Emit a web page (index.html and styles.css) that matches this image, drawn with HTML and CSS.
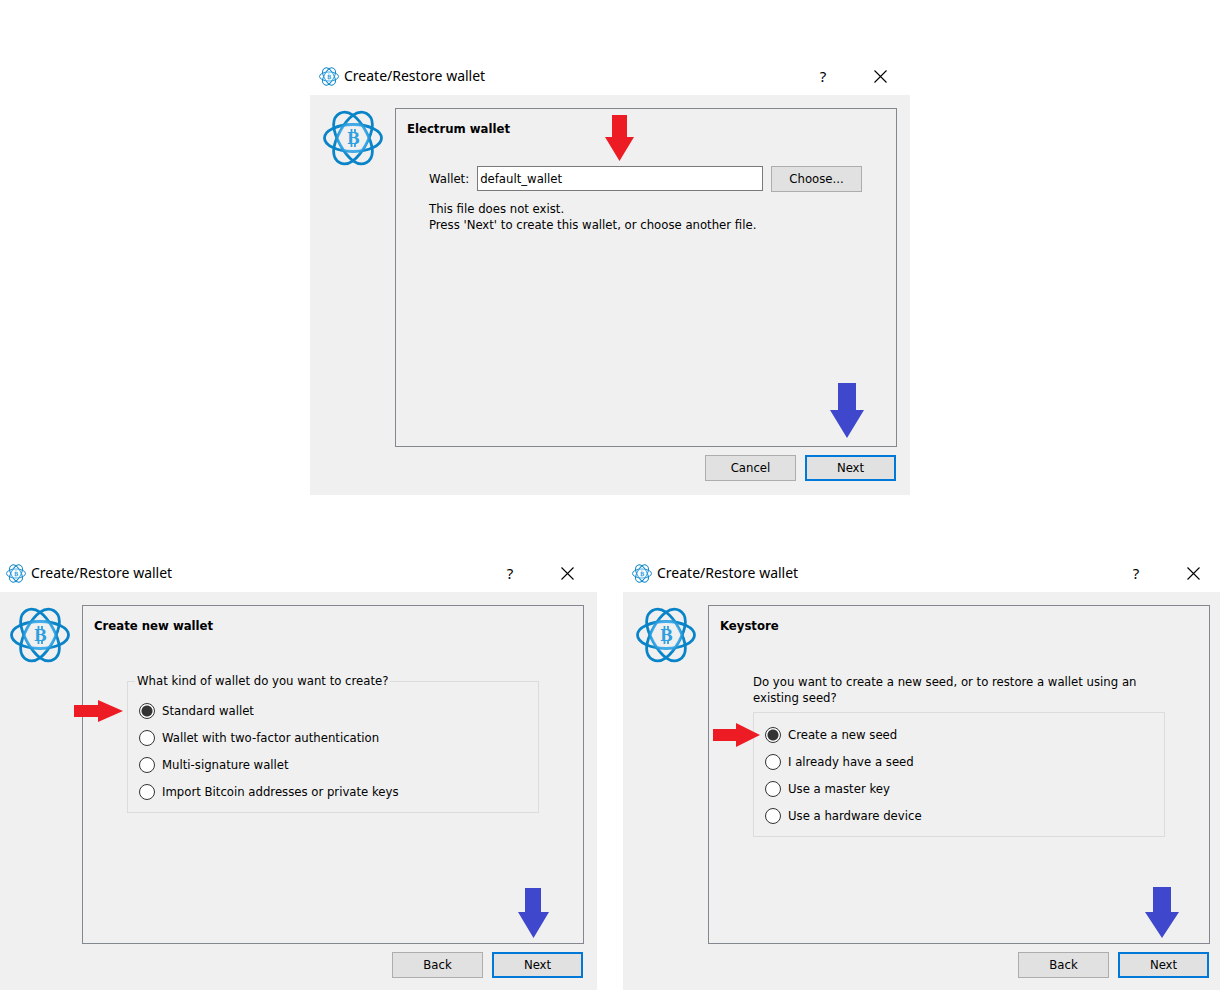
FILE: index.html
```html
<!DOCTYPE html>
<html lang="en">
<head>
    <meta charset="UTF-8">
    <meta name="viewport" content="width=device-width, initial-scale=1.0">
    <title>Create/Restore wallet</title>
    <link rel="stylesheet" href="styles.css">
</head>

<body>
    <!-- shared icons -->
    <svg class="defs" width="0" height="0" aria-hidden="true">
        <defs>
            <radialGradient id="orbit" gradientUnits="userSpaceOnUse" cx="0" cy="0" r="30">
                <stop offset="0.45" stop-color="#45aeea"></stop>
                <stop offset="0.6" stop-color="#0a84c8"></stop>
            </radialGradient>
            <symbol id="logo" viewBox="-30 -28 60 56">
                <g fill="none" stroke="url(#orbit)" stroke-width="2.8">
                    <ellipse cx="0" cy="0" rx="28.500" ry="13.500"></ellipse>
                    <path transform="rotate(61)" d="M-28 0C-28-10-16-14.500 0-14.500S28-10 28 0 16 14.500 0 14.500-28 10-28 0z"></path>
                    <path transform="rotate(119)" d="M-28 0C-28-10-16-14.500 0-14.500S28-10 28 0 16 14.500 0 14.500-28 10-28 0z"></path>
                </g>
                <text class="logo-letter" x="0.500" y="6" text-anchor="middle">B</text>
                <path d="M-1.500-9v3M2-9v3M-1.500 6v3M2 6v3" stroke="#2f9fe0" stroke-width="1.800"></path>
            </symbol>
            <symbol id="close" viewBox="0 0 13 13">
                <path d="M0.500 0.500l12 12M12.500 0.500l-12 12" stroke="#000" stroke-width="1.100"></path>
            </symbol>
        </defs>
    </svg>

    <main class="page">
        <section class="window window-top">
            <header class="titlebar">
                <svg class="title-icon"><use href="#logo"></use></svg>
                <h1>Create/Restore wallet</h1>
                <button class="caption-btn" type="button">?</button>
                <button class="caption-btn" type="button" aria-label="Close"><svg class="close-icon"><use href="#close"></use></svg></button>
            </header>
            <form class="window-body">
                <svg class="logo"><use href="#logo"></use></svg>
                <div class="panel">
                    <h2>Electrum wallet</h2>
                    <div class="file-row">
                        <label for="wallet-name">Wallet:</label>
                        <input type="text" id="wallet-name" value="default_wallet">
                        <button class="btn" type="button">Choose...</button>
                    </div>
                    <p class="file-note">This file does not exist.<br>Press 'Next' to create this wallet, or choose another file.</p>
                    <svg class="arrow arrow-input" width="29" height="46" viewBox="0 0 29 46"><path d="M7 0h15v22h7L14.500 46 0 22h7z"></path></svg>
                    <svg class="arrow arrow-next" width="34" height="55" viewBox="0 0 34 55"><path d="M8 0h18v27h8L17 55 0 27h8z"></path></svg>
                </div>
                <div class="actions">
                    <button class="btn" type="button">Cancel</button>
                    <button class="btn btn-default" type="button">Next</button>
                </div>
            </form>
        </section>

        <div class="window-row">
            <section class="window window-left">
                <header class="titlebar">
                    <svg class="title-icon"><use href="#logo"></use></svg>
                    <h1>Create/Restore wallet</h1>
                    <button class="caption-btn" type="button">?</button>
                    <button class="caption-btn" type="button" aria-label="Close"><svg class="close-icon"><use href="#close"></use></svg></button>
                </header>
                <form class="window-body">
                    <svg class="logo"><use href="#logo"></use></svg>
                    <div class="panel">
                        <h2>Create new wallet</h2>
                        <fieldset class="options options-titled">
                            <legend>What kind of wallet do you want to create?</legend>
                            <label class="option"><input type="radio" name="kind" checked>Standard wallet
                                <svg class="arrow arrow-option" width="49" height="22" viewBox="0 0 49 22"><path d="M0 5h24V0l25 11-25 11v-5H0z"></path></svg>
                            </label>
                            <label class="option"><input type="radio" name="kind">Wallet with two-factor authentication</label>
                            <label class="option"><input type="radio" name="kind">Multi-signature wallet</label>
                            <label class="option"><input type="radio" name="kind">Import Bitcoin addresses or private keys</label>
                        </fieldset>
                        <svg class="arrow arrow-next" width="31" height="50" viewBox="0 0 31 50"><path d="M7 0h16v24h8L15.500 50 0 24h7z"></path></svg>
                    </div>
                    <div class="actions">
                        <button class="btn" type="button">Back</button>
                        <button class="btn btn-default" type="button">Next</button>
                    </div>
                </form>
            </section>

            <section class="window window-right">
                <header class="titlebar">
                    <svg class="title-icon"><use href="#logo"></use></svg>
                    <h1>Create/Restore wallet</h1>
                    <button class="caption-btn" type="button">?</button>
                    <button class="caption-btn" type="button" aria-label="Close"><svg class="close-icon"><use href="#close"></use></svg></button>
                </header>
                <form class="window-body">
                    <svg class="logo"><use href="#logo"></use></svg>
                    <div class="panel">
                        <h2>Keystore</h2>
                        <p class="question" id="seed-question">Do you want to create a new seed, or to restore a wallet using an existing seed?</p>
                        <fieldset class="options" aria-labelledby="seed-question">
                            <label class="option"><input type="radio" name="seed" checked>Create a new seed
                                <svg class="arrow arrow-option" width="47" height="24" viewBox="0 0 47 24"><path d="M0 6h23V0l24 12-24 12v-6H0z"></path></svg>
                            </label>
                            <label class="option"><input type="radio" name="seed">I already have a seed</label>
                            <label class="option"><input type="radio" name="seed">Use a master key</label>
                            <label class="option"><input type="radio" name="seed">Use a hardware device</label>
                        </fieldset>
                        <svg class="arrow arrow-next" width="34" height="51" viewBox="0 0 34 51"><path d="M8 0h18v25h8L17 51 0 25h8z"></path></svg>
                    </div>
                    <div class="actions">
                        <button class="btn" type="button">Back</button>
                        <button class="btn btn-default" type="button">Next</button>
                    </div>
                </form>
            </section>
        </div>
    </main>
</body>
</html>
```

FILE: styles.css
```css
* {
    box-sizing: border-box;
}

body {
    margin: 0;
    background-color: #fff;
    color: #000;
    font-family: "DejaVu Sans Condensed", "DejaVu Sans", sans-serif;
    font-size: 13px;
    line-height: 16px;
}

h1,
h2,
p {
    margin: 0;
}

.defs {
    position: absolute;
}

.page {
    padding-top: 57px;
}

.window-top {
    max-width: 600px;
    margin: 0 auto 59px;
}

.window-row {
    display: grid;
    grid-template-columns: 1fr 1fr;
    gap: 26px;
}

/* title bar */
.titlebar {
    display: flex;
    align-items: center;
    height: 38px;
    padding: 0 3px 0 9px;
}

.title-icon {
    width: 20px;
    height: 19px;
    margin-right: 5px;
}

.titlebar h1 {
    flex: 1;
    font-family: "Noto Sans", sans-serif;
    font-size: 14px;
    font-weight: normal;
    line-height: 20px;
}

.caption-btn {
    display: flex;
    align-items: center;
    justify-content: center;
    width: 54px;
    height: 30px;
    margin-left: 3px;
    padding: 0;
    border: none;
    background: none;
    color: #000;
    font-family: "Noto Sans", sans-serif;
    font-size: 15px;
}

.close-icon {
    width: 13px;
    height: 13px;
}

/* window content */
.window-body {
    display: grid;
    grid-template-columns: 60px 1fr;
    column-gap: 12px;
    row-gap: 8px;
    padding: 13px 13px 14px;
    background-color: #f0f0f0;
}

.logo {
    width: 60px;
    height: 56px;
    margin-top: 2px;
}

.logo-letter {
    fill: #2f9fe0;
    font-family: "DejaVu Serif Condensed", "DejaVu Serif", serif;
    font-size: 17px;
    font-weight: bold;
}

.panel {
    position: relative;
    min-height: 339px;
    padding: 12px 34px 11px 11px;
    border: 1px solid #828790;
}

.panel h2 {
    font-size: 13px;
    font-weight: bold;
}

.actions {
    grid-column: 2;
    display: flex;
    justify-content: flex-end;
    gap: 9px;
    padding-right: 1px;
}

.btn {
    width: 91px;
    height: 26px;
    padding: 0;
    border: 1px solid #adadad;
    background-color: #e1e1e1;
    color: #000;
    font: inherit;
}

.btn-default {
    border: 2px solid #0078d7;
}

/* wallet file */
.file-row {
    display: flex;
    align-items: center;
    gap: 8px;
    margin: 29px 0 9px 22px;
}

.file-row input {
    flex: 1;
    align-self: flex-start;
    min-width: 0;
    height: 25px;
    padding: 0 2px;
    border: 1px solid #7a7a7a;
    background-color: #fff;
    color: #000;
    font: inherit;
}

.file-note {
    margin-left: 22px;
}

/* radio groups */
.question {
    margin: 40px 10px 6px 33px;
}

.options {
    margin: 0 10px 0 33px;
    padding: 8px 11px 7px;
    border: 1px solid #dcdcdc;
}

.options-titled {
    margin-top: 39px;
}

.options legend {
    margin-left: -4px;
    padding: 0 2px;
}

.option {
    position: relative;
    display: flex;
    align-items: center;
    height: 27px;
}

.option input {
    appearance: none;
    width: 16px;
    height: 16px;
    margin: 0 7px 0 0;
    border: 1px solid #333;
    border-radius: 50%;
    background-color: #fff;
}

.option input:checked {
    background-image: radial-gradient(circle, #333 5px, transparent 6px);
}

/* pointer arrows */
.arrow {
    position: absolute;
    fill: #ed1c24;
}

.arrow-input {
    top: 6px;
    left: 209px;
}

.arrow-option {
    right: 100%;
    margin-right: 5px;
}

.window-left .arrow-option {
    margin-right: 16px;
}

.arrow-next {
    right: 32px;
    bottom: 8px;
    fill: #3f48cc;
}

.window-left .arrow-next {
    right: 34px;
    bottom: 5px;
}

.window-right .arrow-next {
    right: 30px;
    bottom: 5px;
}

/* the lower windows sit against the page edges */
.window-left .titlebar {
    padding-left: 6px;
}

.window-left .window-body {
    padding-left: 10px;
}

.window-right .titlebar {
    padding-right: 0;
}

.window-right .window-body {
    padding-right: 10px;
}

.window-row .window-body {
    padding-bottom: 12px;
}
```
